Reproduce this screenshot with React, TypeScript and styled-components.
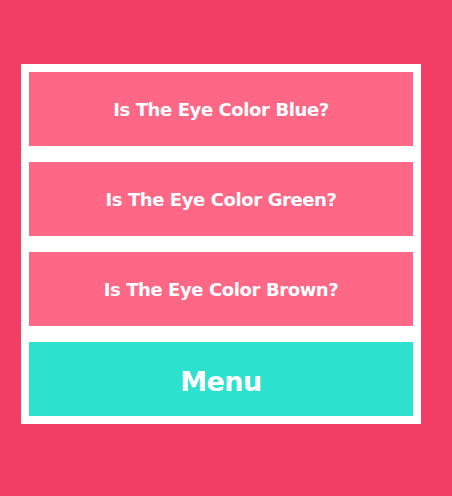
import styled, { createGlobalStyle } from 'styled-components'

const GlobalStyle = createGlobalStyle`
  html, body {
    margin: 0;
    padding: 0;
    background: #f23e64;
  }
`

const Page = styled.div`
  min-height: 496px;
  padding: 64px 0 0 21px;
  box-sizing: border-box;
  font-family: 'DejaVu Sans', 'Open Sans', sans-serif;
`

const Panel = styled.div`
  width: 400px;
  box-sizing: border-box;
  padding: 8px;
  background: #ffffff;
  display: flex;
  flex-direction: column;
  gap: 16px;
`

const Choice = styled.button<{ $menu?: boolean }>`
  height: 74px;
  border: none;
  margin: 0;
  padding: 0;
  display: flex;
  align-items: center;
  justify-content: center;
  background: ${({ $menu }) => ($menu ? '#2ce2ce' : '#ff6786')};
  color: #ffffff;
  font-family: inherit;
  font-weight: 700;
  font-size: ${({ $menu }) => ($menu ? '27px' : '18px')};
  letter-spacing: ${({ $menu }) => ($menu ? '-0.5px' : '-0.4px')};
  padding-top: ${({ $menu }) => ($menu ? '4px' : '0')};
  cursor: pointer;
`

const questions = ['Blue', 'Green', 'Brown']

export default function App() {
  return (
    <>
      <GlobalStyle />
      <Page>
        <Panel>
          {questions.map((c) => (
            <Choice key={c}>Is The Eye Color {c}?</Choice>
          ))}
          <Choice $menu>Menu</Choice>
        </Panel>
      </Page>
    </>
  )
}
